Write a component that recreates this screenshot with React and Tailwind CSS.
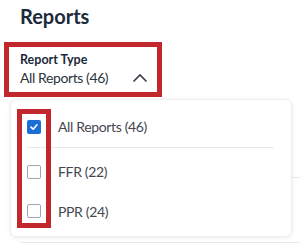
import React from "react";

function Box({ checked }) {
  if (checked) {
    return (
      <span className="flex h-[14px] w-[14px] items-center justify-center rounded-[2px] bg-[#1a6fd6]">
        <svg width="10" height="10" viewBox="0 0 10 10">
          <path d="M2 5.2 L4.2 7.2 L8 2.8" fill="none" stroke="white" strokeWidth="1.6" strokeLinecap="round" strokeLinejoin="round" />
        </svg>
      </span>
    );
  }
  return <span className="block h-[14px] w-[14px] rounded-[2px] border-[1.5px] border-[#a0a6b4] bg-white" />;
}

export default function App() {
  return (
    <div className="relative h-[245px] w-[300px] overflow-hidden bg-white font-['Lato',sans-serif] text-[#2b2f36]">
      <div className="h-[40px] pl-5 pt-[3px]">
        <h1 className="text-[20px] font-bold leading-[26px] text-[#1c2a3b]">Reports</h1>
      </div>
      <div className="flex h-[57px] items-end pb-[10px] pl-5 pr-[14px]">
        <div className="flex w-[128px] flex-col">
          <span className="text-[12.5px] font-bold leading-[15px] text-[#1c2a3b]">Report Type</span>
          <div className="mt-[2px] flex items-center justify-between">
            <span className="text-[14px] leading-[18px] tracking-[-0.4px] text-[#2b3440]">All Reports (46)</span>
            <svg width="16" height="10" viewBox="0 0 16 10">
              <path d="M1.5 8.5 L8 2 L14.5 8.5" fill="none" stroke="#3a3f47" strokeWidth="1.6" />
            </svg>
          </div>
        </div>
      </div>
      <div className="ml-5 h-[81px] border-b border-[#e8eaee]" />
      <div className="ml-5 h-[65px] border-b border-[#e8eaee]" />

      <div className="absolute left-[10px] top-[99px] flex h-[138px] w-[282px] flex-col rounded-[6px] border border-[#eceef2] bg-white px-[16px] shadow-[0_1px_4px_rgba(0,0,0,0.08)]">
        <div className="mr-[1px] flex h-[48px] items-center gap-[17px] border-b border-[#e8eaee] pt-[6px]">
          <Box checked />
          <span className="text-[14px] tracking-[-0.35px] text-[#43474e]">All Reports (46)</span>
        </div>
        <div className="flex h-[43px] items-center gap-[17px] pt-[4px]">
          <Box />
          <span className="text-[14px] tracking-[-0.35px] text-[#43474e]">FFR (22)</span>
        </div>
        <div className="flex h-[36px] items-center gap-[17px] pt-[4px]">
          <Box />
          <span className="text-[14px] tracking-[-0.35px] text-[#43474e]">PPR (24)</span>
        </div>
      </div>

      <div className="absolute left-[4px] top-[42px] h-[55px] w-[158px] border-[5px] border-[#c1272d]" />
      <div className="absolute left-[17px] top-[109px] h-[119px] w-[34px] border-[5px] border-[#c1272d]" />
    </div>
  );
}
